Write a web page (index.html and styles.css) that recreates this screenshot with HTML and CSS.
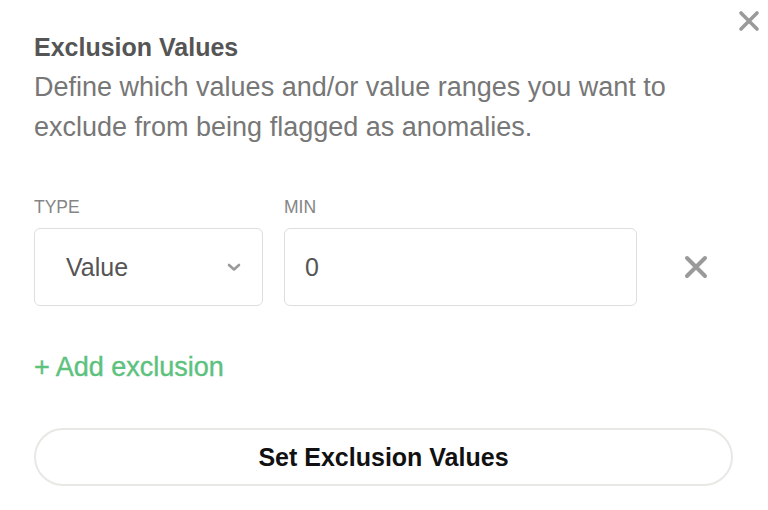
FILE: index.html
```html
<!DOCTYPE html>
<html>
<head>
<meta charset="utf-8">
<link rel="stylesheet" href="styles.css">
</head>
<body>
<div class="panel">
  <button class="close" aria-label="Close">
    <svg width="22" height="22" viewBox="0 0 22 22"><path d="M3 3 L19 19 M19 3 L3 19" stroke="#9a9a9a" stroke-width="3.6" stroke-linecap="round"/></svg>
  </button>
  <h2 class="title">Exclusion Values</h2>
  <p class="desc">Define which values and/or value ranges you want to exclude from being flagged as anomalies.</p>

  <div class="grid">
    <div class="label">TYPE</div>
    <div class="label">MIN</div>
    <div></div>
    <div class="box select">
      <span>Value</span>
      <svg class="chev" width="14" height="9" viewBox="0 0 14 9"><path d="M2 2 L7 6.5 L12 2" fill="none" stroke="#9a9a9a" stroke-width="2.6" stroke-linecap="round" stroke-linejoin="round"/></svg>
    </div>
    <div class="box input"><span>0</span></div>
    <div class="remove">
      <svg width="24" height="24" viewBox="0 0 24 24"><path d="M3 3 L21 21 M21 3 L3 21" stroke="#9a9a9a" stroke-width="4" stroke-linecap="round"/></svg>
    </div>
  </div>

  <div class="add">+ Add exclusion</div>

  <button class="submit">Set Exclusion Values</button>
</div>
</body>
</html>
```
FILE: styles.css
```css
html, body {
  margin: 0;
  padding: 0;
  background: #fff;
  font-family: "Liberation Sans", Arial, sans-serif;
}
.panel {
  position: relative;
  width: 768px;
  height: 510px;
  box-sizing: border-box;
  padding: 32px 36px 0 34px;
}
.close {
  position: absolute;
  top: 10px;
  right: 8px;
  border: 0;
  background: none;
  padding: 0;
  width: 22px;
  height: 22px;
}
.title {
  margin: 0;
  font-size: 25px;
  line-height: 30px;
  font-weight: bold;
  color: #555;
}
.desc {
  margin: 5px 0 0;
  font-size: 27px;
  line-height: 40px;
  color: #777;
}
.grid {
  margin-top: 50px;
  display: grid;
  grid-template-columns: 229px 353px 1fr;
  column-gap: 21px;
  row-gap: 11px;
}
.label {
  font-size: 17.5px;
  line-height: 20px;
  color: #858585;
}
.box {
  height: 78px;
  box-sizing: border-box;
  border: 1.5px solid #dedede;
  border-radius: 6px;
  display: flex;
  align-items: center;
  font-size: 25px;
  color: #555;
}
.select {
  padding: 0 21px 0 31px;
  justify-content: space-between;
}
.input {
  padding-left: 20px;
}
.remove {
  display: flex;
  align-items: center;
  padding-left: 26px;
}
.add {
  margin-top: 45px;
  font-size: 27px;
  line-height: 32px;
  color: #5cc27e;
  -webkit-text-stroke: 0.4px #5cc27e;
}
.submit {
  display: block;
  margin-top: 45px;
  width: 699px;
  height: 58px;
  border: 2px solid #e8e8e4;
  border-radius: 29px;
  background: #fff;
  font-family: "Liberation Sans", Arial, sans-serif;
  font-size: 25px;
  font-weight: bold;
  color: #111;
  padding: 0;
}
```
